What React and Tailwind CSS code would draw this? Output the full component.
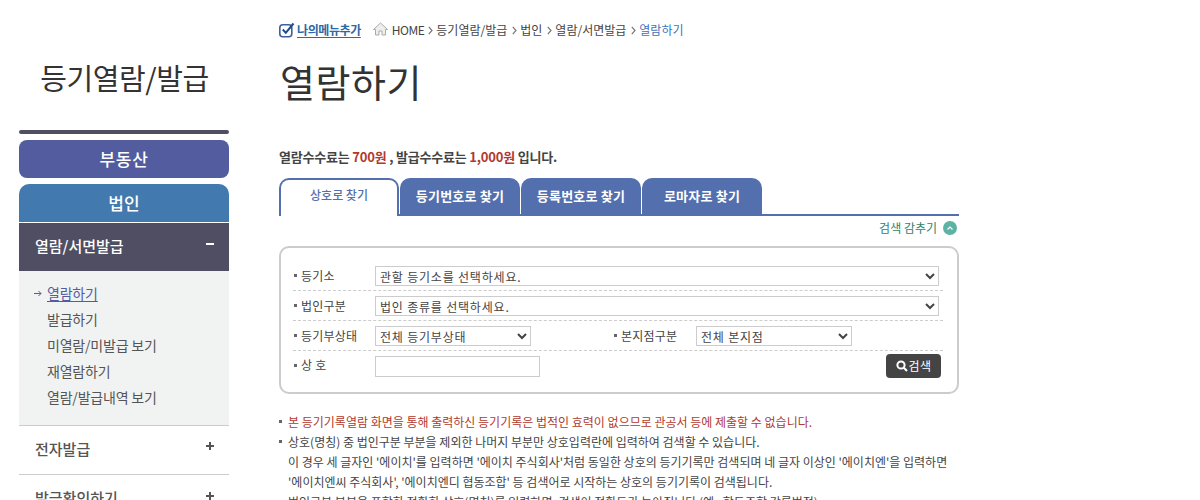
import { useState } from 'react';

const font = "font-['Noto_Sans_CJK_KR','Liberation_Sans',sans-serif]";

const subMenu = ['열람하기', '발급하기', '미열람/미발급 보기', '재열람하기', '열람/발급내역 보기'];
const crumbs = ['등기열람/발급', '법인', '열람/서면발급'];
const tabs = ['등기번호로 찾기', '등록번호로 찾기', '로마자로 찾기'];

const Chevron = () => (
  <svg width="5" height="9" viewBox="0 0 5 9" className="mx-[3px] mt-[5px] shrink-0">
    <path d="M0.8 0.8 L4 4.5 L0.8 8.2" fill="none" stroke="#777" strokeWidth="1.2" />
  </svg>
);

const Plus = () => (
  <svg width="8" height="8" viewBox="0 0 8 8" className="mb-[6px] mr-[-1px]">
    <path d="M4 0 V8 M0 4 H8" stroke="#555" strokeWidth="2" />
  </svg>
);

const Label = ({ children, className = 'w-[82px]' }) => (
  <div className={`flex items-center shrink-0 text-[12px] tracking-[0.2px] text-[#444] ${className}`}>
    <span className="w-[3px] h-[3px] bg-[#666] ml-[1px] mr-[4px]" />
    {children}
  </div>
);

const Field = ({ children, className = 'w-[564px]' }) => (
  <select className={`h-[20px] border border-[#ccc] bg-white text-[12px] tracking-[0.8px] py-0 text-[#444] pl-0 outline-none ${className}`}>
    <option>{children}</option>
  </select>
);

const Row = ({ children, className = 'h-[30px] border-b border-dashed border-[#ccc]' }) => (
  <div className={`flex items-center ${className}`}>{children}</div>
);

const App = () => {
  const [activeTab] = useState(0);

  return (
    <div className={`h-[500px] overflow-hidden bg-white flex ${font}`}>
      <aside className="w-[210px] ml-[19px] shrink-0">
        <h2 className="h-[130px] pt-[55px] pl-[1px] text-center text-[29px] leading-[44px] tracking-[-0.4px] text-[#333]">등기열람/발급</h2>
        <div className="h-[4px] rounded-[2px] bg-[#4f4e63]" />
        <div className="mt-[6px] h-[38px] rounded-[8px] bg-[#525c9e] text-white text-[17px] tracking-[0.7px] font-medium leading-[38px] text-center">부동산</div>
        <div className="mt-[6px] h-[38px] rounded-t-[10px] bg-[#4279ae] text-white text-[17px] font-medium leading-[38px] text-center">법인</div>
        <div className="mt-[1px] h-[48px] bg-[#4f4e63] text-white text-[15px] font-medium px-[16px] pb-[2px] flex items-center justify-between">
          <span>열람/서면발급</span>
          <span className="w-[8px] h-[2px] bg-white mr-[-1px] mb-[5px]" />
        </div>
        <ul className="h-[155px] bg-[#f1f3f3] border-b border-[#ccc] pt-[9px] pl-[28px] text-[14px] text-[#555] tracking-[-0.2px]">
          {subMenu.map((item, i) => (
            <li key={item} className="h-[26px] leading-[26px] flex items-center relative">
              {i === 0 && (
                <svg width="8" height="7" viewBox="0 0 8 7" className="absolute left-[-13px] top-[10px]">
                  <path d="M0 3.5 H7 M4.5 1 L7 3.5 L4.5 6" fill="none" stroke="#525c9e" strokeWidth="1" />
                </svg>
              )}
              <span className={i === 0 ? 'text-[#525c9e] underline underline-offset-2' : ''}>{item}</span>
            </li>
          ))}
        </ul>
        <div className="h-[49px] border-b border-[#ccc] px-[16px] pb-[2px] flex items-center justify-between text-[15px] font-medium text-[#555]">
          <span>전자발급</span>
          <Plus />
        </div>
        <div className="h-[49px] px-[16px] pb-[2px] flex items-center justify-between text-[15px] font-medium text-[#555]">
          <span>발급확인하기</span>
          <Plus />
        </div>
      </aside>

      <main className="w-[680px] ml-[50px] shrink-0">
        <div className="h-[60px] pt-[21px] flex items-start text-[12px] leading-[18px] text-[#444]">
          <svg width="16" height="16" viewBox="0 0 16 16" className="mr-[2px] mt-[1px]">
            <rect x="0.8" y="2.8" width="12" height="12" rx="3" fill="none" stroke="#3d5f9e" strokeWidth="1.6" />
            <path d="M3.8 7.5 L6.8 10.8 L14.5 1.5" fill="none" stroke="#1f4a86" strokeWidth="2" />
          </svg>
          <span className="font-bold tracking-[-0.4px] text-[#2b6aa8] underline underline-offset-2 mr-[12px]">나의메뉴추가</span>
          <svg width="15" height="14" viewBox="0 0 15 14" className="mr-[3px] mt-[1px]">
            <path d="M7.5 1 L14.5 7.5 H12.5 V13 H9 V9 H6 V13 H2.5 V7.5 H0.5 Z" fill="#eee" stroke="#aaa" />
          </svg>
          <span className="ml-[1px] mr-[1px] tracking-[-0.5px]">HOME</span>
          {crumbs.map(c => (
            <span key={c} className="flex items-start">
              <Chevron />
              <span className="mr-[2px]">{c}</span>
            </span>
          ))}
          <Chevron />
          <span className="text-[#3b73b9]">열람하기</span>
        </div>

        <h1 className="h-[63px] pl-[1px] text-[38px] leading-[42px] text-[#333] tracking-[0.5px]">열람하기</h1>

        <p className="mt-[22px] h-[33px] text-[13px] leading-[24px] font-bold text-[#444] tracking-[-0.2px]">
          열람수수료는 <span className="text-[#b03a2e]">700원</span> , 발급수수료는 <span className="text-[#b03a2e]">1,000원</span> 입니다.
        </p>

        <div className="h-[38px] flex border-b-2 border-[#536fae]">
          <div className={`w-[120px] h-[38px] mr-[1px] rounded-t-[10px] border-2 border-b-0 border-[#536fae] bg-white text-center text-[12px] font-medium leading-[30px] text-[#536fae] ${activeTab === 0 ? '' : 'hidden'}`}>
            상호로 찾기
          </div>
          {tabs.map(t => (
            <div key={t} className="w-[120px] mr-[1px] last:mr-0 rounded-t-[10px] bg-[#536fae] text-center text-[13px] tracking-[0.2px] font-bold leading-[36px] text-white">
              {t}
            </div>
          ))}
        </div>

        <div className="h-[30px] pb-[6px] flex items-center justify-end pr-[2px] text-[12px] text-[#2f7f70]">
          검색 감추기
          <span className="ml-[6px] w-[14px] h-[14px] rounded-full bg-[#5cb3a5] flex items-center justify-center">
            <svg width="6" height="4" viewBox="0 0 6 4">
              <path d="M0.5 3.5 L3 1 L5.5 3.5" fill="none" stroke="#fff" strokeWidth="1.2" />
            </svg>
          </span>
        </div>

        <div className="h-[148px] border-2 border-[#ccc] rounded-[10px] pl-[12px] pr-[14px] pt-[13px]">
          <Row>
            <Label>등기소</Label>
            <Field>관할 등기소를 선택하세요.</Field>
          </Row>
          <Row>
            <Label>법인구분</Label>
            <Field>법인 종류를 선택하세요.</Field>
          </Row>
          <Row>
            <Label>등기부상태</Label>
            <Field className="w-[156px]">전체 등기부상태</Field>
            <Label className="w-[83px] ml-[82px]">본지점구분</Label>
            <Field className="w-[156px]">전체 본지점</Field>
          </Row>
          <Row className="h-[31px]">
            <Label className="w-[82px] mb-[3px]">상 호</Label>
            <input className="w-[165px] h-[21px] border border-[#ccc] bg-white" />
            <button className="ml-auto mr-[2px] mb-[2px] w-[55px] h-[24px] rounded-[4px] bg-[#444] text-white text-[12px] tracking-[0.4px] flex items-center justify-center">
              <svg width="12" height="12" viewBox="0 0 12 12" className="mr-[1px]">
                <circle cx="5" cy="5" r="3.6" fill="none" stroke="#fff" strokeWidth="2" />
                <path d="M7.8 7.8 L11 11" stroke="#fff" strokeWidth="2.2" />
              </svg>
              검색
            </button>
          </Row>
        </div>

        <ul className="mt-[18px] text-[12px] leading-[20px] text-[#444]">
          <li className="pl-[9px] relative text-[#b03a2e]">
            <span className="absolute left-0 top-[8px] w-[3px] h-[3px] bg-[#666]" />
            본 등기기록열람 화면을 통해 출력하신 등기기록은 법적인 효력이 없으므로 관공서 등에 제출할 수 없습니다.
          </li>
          <li className="pl-[9px] relative whitespace-nowrap">
            <span className="absolute left-0 top-[8px] w-[3px] h-[3px] bg-[#666]" />
            상호(명칭) 중 법인구분 부분을 제외한 나머지 부분만 상호입력란에 입력하여 검색할 수 있습니다.<br />
            이 경우 세 글자인 '에이치'를 입력하면 '에이치 주식회사'처럼 동일한 상호의 등기기록만 검색되며 네 글자 이상인 '에이치엔'을 입력하면<br />
            '에이치엔씨 주식회사', '에이치엔디 협동조합' 등 검색어로 시작하는 상호의 등기기록이 검색됩니다.<br />
            법인구분 부분을 포함한 정확한 상호(명칭)를 입력하면, 검색이 정확도가 높아집니다 (예 : 합동조합 강릉법정)
          </li>
        </ul>
      </main>
    </div>
  );
};

export default App;
